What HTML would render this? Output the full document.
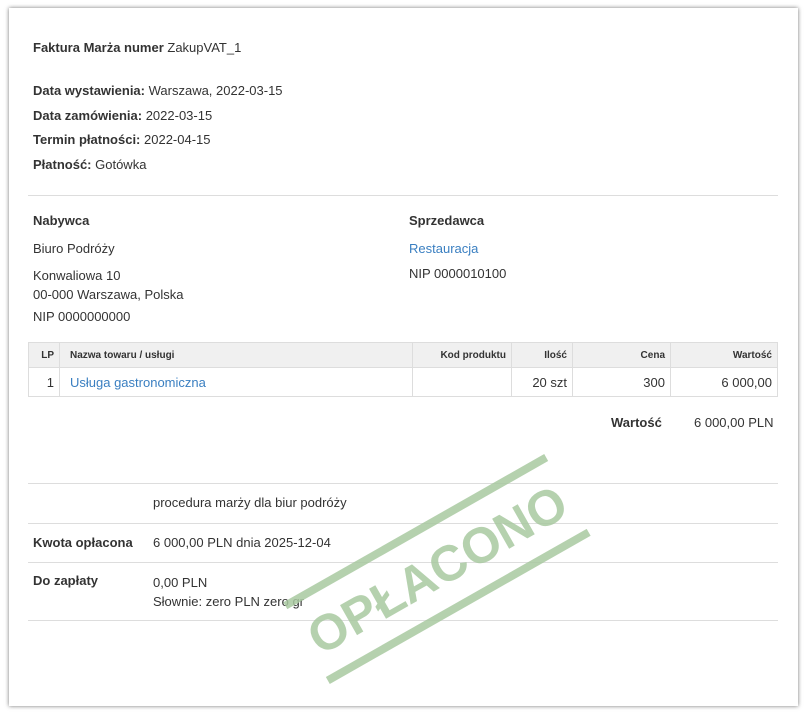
<!DOCTYPE html>
<html><head><meta charset="utf-8"><style>
body{margin:0;background:#fff;width:807px;height:713px;overflow:hidden;font-family:"Liberation Sans",Arial,sans-serif;color:#333;font-size:13px}
.card{position:absolute;left:9px;top:8px;width:789px;height:698px;background:#fff;box-shadow:0 0 4px rgba(0,0,0,.55)}
.a{position:absolute;white-space:nowrap}
b{font-weight:bold}
.link{color:#3a7fc1}
hr{position:absolute;border:0;border-top:1px solid #ddd;margin:0;height:0}
table{position:absolute;left:28px;top:342px;width:750px;border-collapse:collapse}
th{background:#f0f0f0;font-size:10px;height:24px;border:1px solid #ddd;text-align:right;padding:0 5px;font-weight:bold}
td{border:1px solid #ddd;height:28px;text-align:right;padding:0 5px;font-size:13px}
</style></head><body>
<div class="card"></div>
<div class="a" style="left:33px;top:40px"><b>Faktura Marża numer</b> ZakupVAT_1</div>
<div class="a" style="left:33px;top:83px"><b>Data wystawienia:</b> Warszawa, 2022-03-15</div>
<div class="a" style="left:33px;top:108px"><b>Data zamówienia:</b> 2022-03-15</div>
<div class="a" style="left:33px;top:132px"><b>Termin płatności:</b> 2022-04-15</div>
<div class="a" style="left:33px;top:157px"><b>Płatność:</b> Gotówka</div>
<hr style="left:28px;top:195px;width:750px">
<div class="a" style="left:33px;top:213px"><b>Nabywca</b></div>
<div class="a" style="left:33px;top:241px">Biuro Podróży</div>
<div class="a" style="left:33px;top:266px;line-height:19px">Konwaliowa 10<br>00-000 Warszawa, Polska</div>
<div class="a" style="left:33px;top:309px">NIP 0000000000</div>
<div class="a" style="left:409px;top:213px"><b>Sprzedawca</b></div>
<div class="a link" style="left:409px;top:241px">Restauracja</div>
<div class="a" style="left:409px;top:266px">NIP 0000010100</div>
<table>
<tr><th style="width:20px">LP</th><th style="text-align:left;padding-left:10px">Nazwa towaru / usługi</th><th style="width:88px">Kod produktu</th><th style="width:50px">Ilość</th><th style="width:87px">Cena</th><th style="width:96px">Wartość</th></tr>
<tr><td>1</td><td class="link" style="text-align:left;padding-left:10px">Usługa gastronomiczna</td><td></td><td>20 szt</td><td>300</td><td>6 000,00</td></tr>
</table>
<div class="a" style="left:611px;top:415px"><b>Wartość</b></div>
<div class="a" style="left:694px;top:415px">6 000,00 PLN</div>
<hr style="left:28px;top:483px;width:750px">
<div class="a" style="left:153px;top:495px">procedura marży dla biur podróży</div>
<hr style="left:28px;top:523px;width:750px">
<div class="a" style="left:33px;top:535px"><b>Kwota opłacona</b></div>
<div class="a" style="left:153px;top:535px">6 000,00 PLN dnia 2025-12-04</div>
<hr style="left:28px;top:562px;width:750px">
<div class="a" style="left:33px;top:573px"><b>Do zapłaty</b></div>
<div class="a" style="left:153px;top:573px;line-height:19px">0,00 PLN<br>Słownie: zero PLN zero gr</div>
<hr style="left:28px;top:620px;width:750px">
<svg style="position:absolute;left:0;top:0" width="807" height="713">
<g transform="translate(437,569) rotate(-29.6)" fill="#a9c9a1" opacity="0.85">
<rect x="-150" y="-47" width="300" height="8"/>
<rect x="-150" y="39" width="300" height="8"/>
<text x="0" y="18" text-anchor="middle" font-family="Liberation Sans,sans-serif" font-weight="bold" font-size="50">OPŁACONO</text>
</g>
</svg>
</body></html>
